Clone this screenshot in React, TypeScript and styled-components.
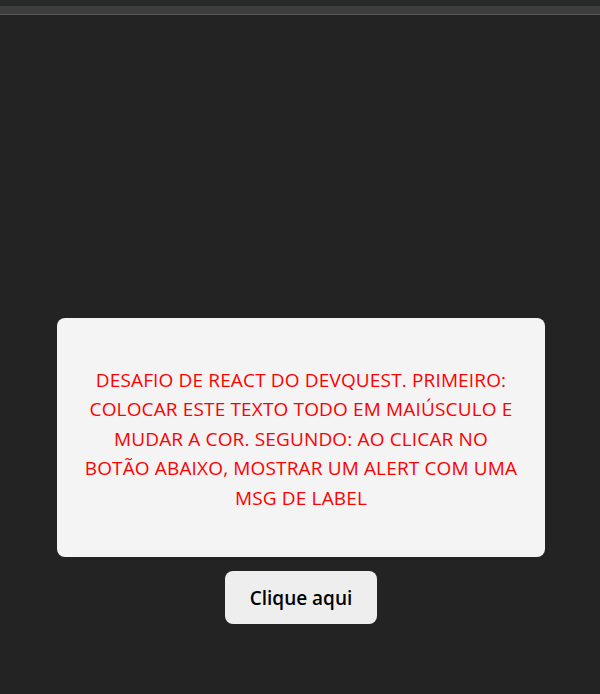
import React from "react";
import styled, { createGlobalStyle } from "styled-components";

const Global = createGlobalStyle`
  html, body {
    margin: 0;
    padding: 0;
    background: #232323;
    font-family: "Open Sans", "Noto Sans", sans-serif;
  }
`;

const TopStrip = styled.div`
  height: 6px;
  background: #272928;
`;

const TabBar = styled.div`
  height: 8px;
  background: #3d3d3d;
  border-bottom: 1px solid #5a5a5a;
`;

const Main = styled.main`
  display: flex;
  flex-direction: column;
  align-items: center;
  gap: 14px;
  padding: 303px 0 60px;
  margin-left: 2px;
`;

const Card = styled.section`
  box-sizing: border-box;
  width: 488px;
  height: 239px;
  background: #f4f4f4;
  border-radius: 8px;
  display: flex;
  align-items: center;
  justify-content: center;
  padding: 4px 20px 0;
`;

const Message = styled.p`
  margin: 0;
  color: #ff0000;
  text-transform: uppercase;
  text-align: center;
  font-size: 19px;
  letter-spacing: 0.15px;
  line-height: 29.5px;
  max-width: 440px;
`;

const ActionButton = styled.button`
  box-sizing: border-box;
  width: 152px;
  height: 53px;
  border: none;
  border-radius: 8px;
  background: #eeeeee;
  color: #000;
  font-family: "Open Sans", "Noto Sans", sans-serif;
  font-size: 19px;
  font-weight: 600;
  cursor: pointer;
`;

export default function App() {
  return (
    <>
      <Global />
      <TopStrip />
      <TabBar />
      <Main>
        <Card>
          <Message>
            Desafio de React do DevQuest. Primeiro: colocar este texto todo em
            maiúsculo e mudar a cor. Segundo: ao clicar no botão abaixo,
            mostrar um alert com uma msg de label
          </Message>
        </Card>
        <ActionButton onClick={() => alert("Label")}>Clique aqui</ActionButton>
      </Main>
    </>
  );
}
